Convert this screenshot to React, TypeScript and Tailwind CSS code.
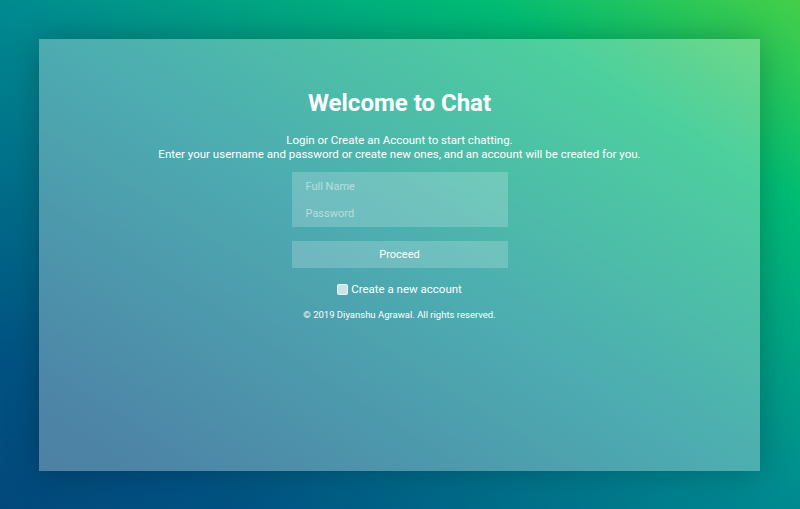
export default function App() {
  return (
    <div className="h-[509px] w-[800px] overflow-hidden bg-[linear-gradient(to_right_top,#03487a,#005282_15%,#008a90_50%,#00bb74_80%,#45cf48)] p-[39px] font-['Roboto',sans-serif]">
      <div className="flex h-[432px] w-[721px] flex-col items-center bg-white/30 pt-[50px] text-white shadow-[0_0_30px_rgba(0,0,0,0.25)]">
        <h1 className="text-[24px] leading-[28px] font-bold">Welcome to Chat</h1>
        <p className="mt-[16px] text-center text-[11.5px] leading-[14px]">
          Login or Create an Account to start chatting.
          <br />
          Enter your username and password or create new ones, and an account will be created for you.
        </p>
        <div className="mt-[11px] flex w-[216px] flex-col bg-white/20">
          <input
            placeholder="Full Name"
            className="h-[27px] bg-transparent px-[14px] pt-[1px] text-[11px] text-white outline-none placeholder:text-white/50"
          />
          <input
            type="password"
            placeholder="Password"
            className="h-[28px] bg-transparent px-[14px] text-[11px] text-white outline-none placeholder:text-white/50"
          />
        </div>
        <button className="mt-[14px] h-[27px] w-[216px] bg-white/20 pt-[1px] text-[11px] text-white">Proceed</button>
        <label className="mt-[14px] flex items-center gap-[3px] text-[11.5px] leading-[14px]">
          <span className="inline-block h-[11px] w-[11px] rounded-[2px] border border-white/60 bg-white/70" />
          Create a new account
        </label>
        <p className="mt-[13px] text-[9.5px] leading-[12px]">© 2019 Diyanshu Agrawal. All rights reserved.</p>
      </div>
    </div>
  )
}
